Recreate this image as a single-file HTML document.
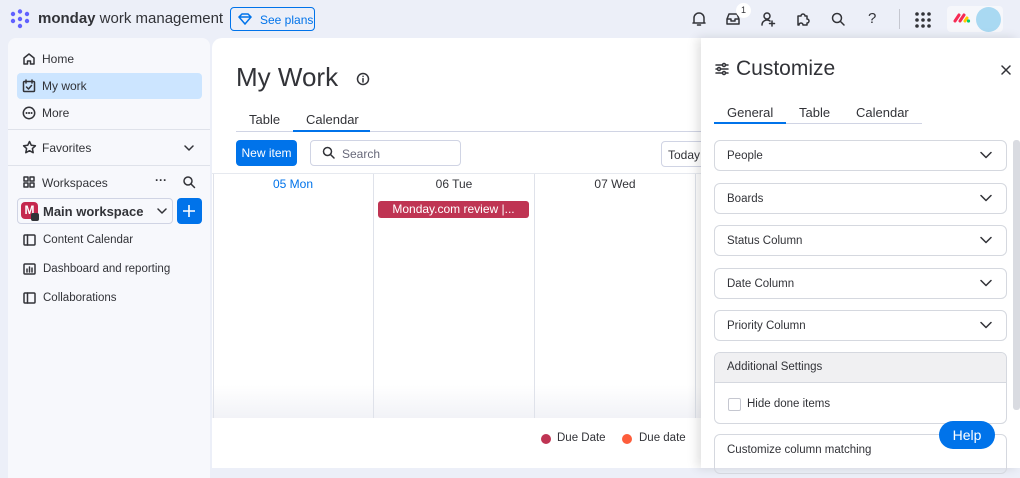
<!DOCTYPE html>
<html><head><meta charset="utf-8"><style>
*{box-sizing:border-box;margin:0;padding:0}
body{width:1020px;height:466px;overflow:hidden;background:#eceff8;font-family:"Liberation Sans",sans-serif;color:#323338;position:relative;font-size:13px}
.a{position:absolute}
.ic{position:absolute;stroke:#323338;fill:none;stroke-width:1.5;stroke-linecap:round;stroke-linejoin:round}
.sb{position:absolute;left:8px;top:38px;width:202px;height:440px;background:#f7f8fc;border-radius:8px 8px 0 0}
.nav{position:absolute;left:42px;font-size:12px;color:#323338}
.main{position:absolute;left:212px;top:38px;width:500px;height:430px;background:#fff;border-radius:10px 0 0 0}
.panel{position:absolute;left:701px;top:38px;width:319px;height:430px;background:#fff;box-shadow:-4px 0 10px rgba(0,0,0,.12)}
.acc{position:absolute;left:13px;width:293px;height:31px;border:1px solid #d5d8df;border-radius:6px;font-size:11.5px;padding:9px 12px}
.acc svg{position:absolute;right:14px;top:10px}
.col{position:absolute;top:174px;height:244px;border-left:1px solid #dfe2ea}
.dh{position:absolute;top:177px;font-size:12px;text-align:center;width:160px}
</style></head><body>
<svg class="a" style="left:9px;top:9px" width="22" height="20" viewBox="0 0 22 20"><g fill="#6161ff"><circle cx="4" cy="5" r="2.2"/><circle cx="11" cy="2.5" r="2.2"/><circle cx="18" cy="5" r="2.2"/><circle cx="4" cy="12" r="2.2"/><circle cx="11" cy="10" r="2.2"/><circle cx="18" cy="12" r="2.2"/><circle cx="11" cy="17" r="2.2"/></g></svg>
<div class="a" style="left:38px;top:10px;font-size:15px"><b>monday</b> work management</div>
<div class="a" style="left:230px;top:7px;width:85px;height:24px;border:1px solid #0073ea;border-radius:4px;color:#0073ea;font-size:12px;padding:5px 0 0 29px">See plans</div>
<svg class="a" style="left:238px;top:13px" width="14" height="12" viewBox="0 0 14 12"><path d="M1 4 L4 1 H10 L13 4 L7 11 Z M1 4H13" fill="none" stroke="#0073ea" stroke-width="1.5"/></svg>
<svg class="ic" style="left:691px;top:11px" width="16" height="16" viewBox="0 0 16 16"><path d="M3 12 V7 a5 5 0 0 1 10 0 V12 H2 H14 M6.5 14 H9.5"/></svg>
<svg class="ic" style="left:725px;top:12px" width="16" height="14" viewBox="0 0 16 14"><path d="M2 7 L4 2 H12 L14 7 V12 H2 Z M2 7 H6 V9 H10 V7 H14"/></svg>
<div class="a" style="left:736px;top:3px;width:15px;height:15px;border-radius:50%;background:#fff;font-size:9px;text-align:center;line-height:15px">1</div>
<svg class="ic" style="left:760px;top:11px" width="16" height="16" viewBox="0 0 16 16"><circle cx="7" cy="5" r="3"/><path d="M2 14 a5 5 0 0 1 8 -4 M12 10 V15 M9.5 12.5 H14.5"/></svg>
<svg class="ic" style="left:795px;top:11px" width="16" height="16" viewBox="0 0 16 16"><path d="M3 5 H6 a2 2 0 0 1 4 0 H12 V8 a2 2 0 0 1 0 4 V14 H8 a2 2 0 0 0 -4 0 H3 Z"/></svg>
<svg class="ic" style="left:830px;top:11px" width="16" height="16" viewBox="0 0 16 16"><circle cx="7" cy="7" r="4.5"/><path d="M10.5 10.5 L14 14"/></svg>
<div class="a" style="left:868px;top:10px;font-size:15px">?</div>
<div class="a" style="left:899px;top:9px;width:1px;height:20px;background:#c5c7d0"></div>
<svg class="a" style="left:914px;top:11px" width="18" height="18" viewBox="0 0 18 18"><g fill="#323338"><circle cx="3" cy="3" r="1.8"/><circle cx="9" cy="3" r="1.8"/><circle cx="15" cy="3" r="1.8"/><circle cx="3" cy="9" r="1.8"/><circle cx="9" cy="9" r="1.8"/><circle cx="15" cy="9" r="1.8"/><circle cx="3" cy="15" r="1.8"/><circle cx="9" cy="15" r="1.8"/><circle cx="15" cy="15" r="1.8"/></g></svg>
<div class="a" style="left:947px;top:6px;width:56px;height:26px;background:#f6f7fb;border-radius:4px"></div>
<svg class="a" style="left:953px;top:13px" width="18" height="10" viewBox="0 0 18 10"><path d="M2 8 L6 2 M7 8 L11 2" stroke="#f62b54" stroke-width="3" stroke-linecap="round"/><path d="M12 8 L14 5" stroke="#ffcc00" stroke-width="3" stroke-linecap="round"/><circle cx="15.5" cy="8" r="1.6" fill="#00ca72"/></svg>
<div class="a" style="left:976px;top:7px;width:25px;height:25px;border-radius:50%;background:#a9d9f2"></div>
<div class="sb"></div>
<div class="a" style="left:17px;top:73px;width:185px;height:26px;background:#cce5ff;border-radius:4px"></div>
<svg class="ic" style="left:22px;top:52px" width="14" height="14" viewBox="0 0 14 14"><path d="M2 6 L7 2 L12 6 V12 H8.5 V9 H5.5 V12 H2 Z"/></svg>
<div class="nav" style="top:52px">Home</div>
<svg class="ic" style="left:22px;top:79px" width="14" height="14" viewBox="0 0 14 14"><rect x="1.5" y="2.5" width="11" height="10" rx="1"/><path d="M4 1 V4 M10 1V4 M4.5 8 L6.5 10 L9.5 6.5"/></svg>
<div class="nav" style="top:79px">My work</div>
<svg class="ic" style="left:22px;top:106px" width="14" height="14" viewBox="0 0 14 14"><circle cx="7" cy="7" r="5.7"/><path d="M4.5 7h.1M7 7h.1M9.5 7h.1" stroke-width="2"/></svg>
<div class="nav" style="top:106px">More</div>
<div class="a" style="left:8px;top:129px;width:202px;height:1px;background:#dfe2ea"></div>
<svg class="ic" style="left:22px;top:140px" width="15" height="15" viewBox="0 0 15 15"><path d="M7.5 1.5 L9.3 5.3 L13.4 5.8 L10.4 8.6 L11.2 12.7 L7.5 10.7 L3.8 12.7 L4.6 8.6 L1.6 5.8 L5.7 5.3 Z"/></svg>
<div class="nav" style="top:141px">Favorites</div>
<svg class="ic" style="left:184px;top:144px" width="10" height="8" viewBox="0 0 10 8"><path d="M1 2 L5 6 L9 2"/></svg>
<div class="a" style="left:8px;top:165px;width:202px;height:1px;background:#dfe2ea"></div>
<svg class="ic" style="left:23px;top:176px" width="12" height="12" viewBox="0 0 12 12"><rect x="1" y="1" width="4" height="4"/><rect x="7" y="1" width="4" height="4"/><rect x="1" y="7" width="4" height="4"/><rect x="7" y="7" width="4" height="4"/></svg>
<div class="nav" style="top:176px">Workspaces</div>
<div class="a" style="left:155px;top:173px;font-size:12px;font-weight:bold">···</div>
<svg class="ic" style="left:182px;top:175px" width="14" height="14" viewBox="0 0 14 14"><circle cx="6" cy="6" r="4"/><path d="M9 9 L12.5 12.5"/></svg>
<div class="a" style="left:17px;top:198px;width:156px;height:26px;border:1px solid #d0d4e4;border-radius:4px"></div>
<div class="a" style="left:21px;top:202px;width:17px;height:17px;border-radius:4px;background:#c5284e;color:#fff;font-size:12px;font-weight:bold;text-align:center;line-height:17px">M</div>
<div class="a" style="left:31px;top:213px;width:8px;height:8px;background:#323338;border-radius:2px"></div>
<div class="a" style="left:43px;top:204px;font-size:13px;font-weight:bold">Main workspace</div>
<svg class="ic" style="left:157px;top:207px" width="10" height="8" viewBox="0 0 10 8"><path d="M1 2 L5 6 L9 2"/></svg>
<div class="a" style="left:177px;top:198px;width:25px;height:26px;background:#0073ea;border-radius:4px"></div>
<svg class="a" style="left:182px;top:204px" width="14" height="14" viewBox="0 0 14 14"><path d="M7 1V13M1 7H13" stroke="#fff" stroke-width="1.6"/></svg>
<svg class="ic" style="left:23px;top:234px" width="13" height="12" viewBox="0 0 13 12" stroke="#676879"><rect x="1" y="1" width="11" height="10" rx="1"/><path d="M4.5 1V11"/></svg>
<div class="nav" style="left:43px;top:234px;font-size:11.5px">Content Calendar</div>
<svg class="ic" style="left:23px;top:263px" width="13" height="12" viewBox="0 0 13 12" stroke="#676879"><rect x="1" y="1" width="11" height="10" rx="1"/><path d="M4 9V6M6.5 9V4M9 9V5"/></svg>
<div class="nav" style="left:43px;top:263px;font-size:11.5px">Dashboard and reporting</div>
<svg class="ic" style="left:23px;top:292px" width="13" height="12" viewBox="0 0 13 12" stroke="#676879"><rect x="1" y="1" width="11" height="10" rx="1"/><path d="M4.5 1V11"/></svg>
<div class="nav" style="left:43px;top:292px;font-size:11.5px">Collaborations</div>
<div class="main"></div>
<div class="a" style="left:236px;top:62px;font-size:26px">My Work</div>
<svg class="ic" style="left:356px;top:72px" width="14" height="14" viewBox="0 0 14 14"><circle cx="7" cy="7" r="5.5"/><path d="M7 6.5V10M7 4.3h.1"/></svg>
<div class="a" style="left:249px;top:112px;font-size:13px">Table</div>
<div class="a" style="left:306px;top:112px;font-size:13px">Calendar</div>
<div class="a" style="left:236px;top:131px;width:476px;height:1px;background:#d0d4e4"></div>
<div class="a" style="left:293px;top:130px;width:77px;height:2px;background:#0073ea"></div>
<div class="a" style="left:236px;top:140px;width:61px;height:26px;background:#0073ea;border-radius:4px;color:#fff;font-size:12px;text-align:center;line-height:26px">New item</div>
<div class="a" style="left:310px;top:140px;width:151px;height:26px;border:1px solid #d0d4e4;border-radius:4px;color:#676879;font-size:12px;padding:6px 0 0 31px">Search</div>
<svg class="ic" style="left:322px;top:146px" width="13" height="13" viewBox="0 0 13 13" stroke="#676879"><circle cx="5.5" cy="5.5" r="4"/><path d="M8.5 8.5 L12 12"/></svg>
<div class="a" style="left:661px;top:141px;width:45px;height:26px;border:1px solid #d0d4e4;border-radius:4px;font-size:12px;padding:6px 0 0 6px">Today</div>
<div class="a" style="left:212px;top:173px;width:490px;height:1px;background:#e6e9ef"></div>
<div class="a" style="left:212px;top:385px;width:490px;height:33px;background:linear-gradient(rgba(245,246,250,0),rgba(240,241,246,.9))"></div>
<div class="col" style="left:213px"></div><div class="col" style="left:373px"></div><div class="col" style="left:534px"></div><div class="col" style="left:695px"></div>
<div class="dh" style="left:213px;color:#0073ea">05 Mon</div>
<div class="dh" style="left:374px">06 Tue</div>
<div class="dh" style="left:535px">07 Wed</div>
<div class="a" style="left:378px;top:201px;width:151px;height:17px;background:#bf3453;border-radius:3px;color:#fff;font-size:12px;text-align:center;line-height:17px">Monday.com review |...</div>
<div class="a" style="left:541px;top:434px;width:10px;height:10px;border-radius:50%;background:#bf3453"></div>
<div class="a" style="left:557px;top:432px;font-size:11.5px">Due Date</div>
<div class="a" style="left:622px;top:434px;width:10px;height:10px;border-radius:50%;background:#fd5d3b"></div>
<div class="a" style="left:639px;top:432px;font-size:11.5px">Due date</div>
<div class="panel">
<svg class="ic" style="left:14px;top:24px" width="14" height="14" viewBox="0 0 14 14"><path d="M1 3H13M1 7H13M1 11H13"/><circle cx="9" cy="3" r="1.5" fill="#fff"/><circle cx="4" cy="7" r="1.5" fill="#fff"/><circle cx="9" cy="11" r="1.5" fill="#fff"/></svg>
<div class="a" style="left:35px;top:19px;font-size:21px">Customize</div>
<svg class="ic" style="left:300px;top:27px" width="10" height="10" viewBox="0 0 10 10"><path d="M1 1L9 9M9 1L1 9"/></svg>
<div class="a" style="left:26px;top:67px;font-size:13px">General</div>
<div class="a" style="left:98px;top:67px;font-size:13px">Table</div>
<div class="a" style="left:155px;top:67px;font-size:13px">Calendar</div>
<div class="a" style="left:13px;top:85px;width:208px;height:1px;background:#d0d4e4"></div>
<div class="a" style="left:13px;top:84px;width:72px;height:2px;background:#0073ea"></div>
<div class="acc" style="top:102px">People<svg class="ic" width="12" height="8" viewBox="0 0 12 8"><path d="M1 1.5L6 6.5L11 1.5"/></svg></div>
<div class="acc" style="top:145px">Boards<svg class="ic" width="12" height="8" viewBox="0 0 12 8"><path d="M1 1.5L6 6.5L11 1.5"/></svg></div>
<div class="acc" style="top:187px">Status Column<svg class="ic" width="12" height="8" viewBox="0 0 12 8"><path d="M1 1.5L6 6.5L11 1.5"/></svg></div>
<div class="acc" style="top:230px">Date Column<svg class="ic" width="12" height="8" viewBox="0 0 12 8"><path d="M1 1.5L6 6.5L11 1.5"/></svg></div>
<div class="acc" style="top:272px">Priority Column<svg class="ic" width="12" height="8" viewBox="0 0 12 8"><path d="M1 1.5L6 6.5L11 1.5"/></svg></div>
<div class="acc" style="top:314px;height:72px;padding:0;overflow:hidden">
<div style="height:30px;background:#f0f0f2;border-bottom:1px solid #d5d8df;padding:8px 12px">Additional Settings</div>
<div style="position:absolute;left:13px;top:45px;width:13px;height:13px;border:1px solid #c5c7d0;border-radius:2px"></div>
<div style="position:absolute;left:32px;top:45px">Hide done items</div></div>
<div class="acc" style="top:396px;height:40px">Customize column matching</div>
<div class="a" style="left:312px;top:102px;width:7px;height:270px;background:#d9dbe1;border-radius:3px"></div>
</div>
<div class="a" style="left:939px;top:421px;width:56px;height:28px;background:#0073ea;border-radius:14px;color:#fff;font-size:14px;text-align:center;line-height:28px">Help</div>
</body></html>
